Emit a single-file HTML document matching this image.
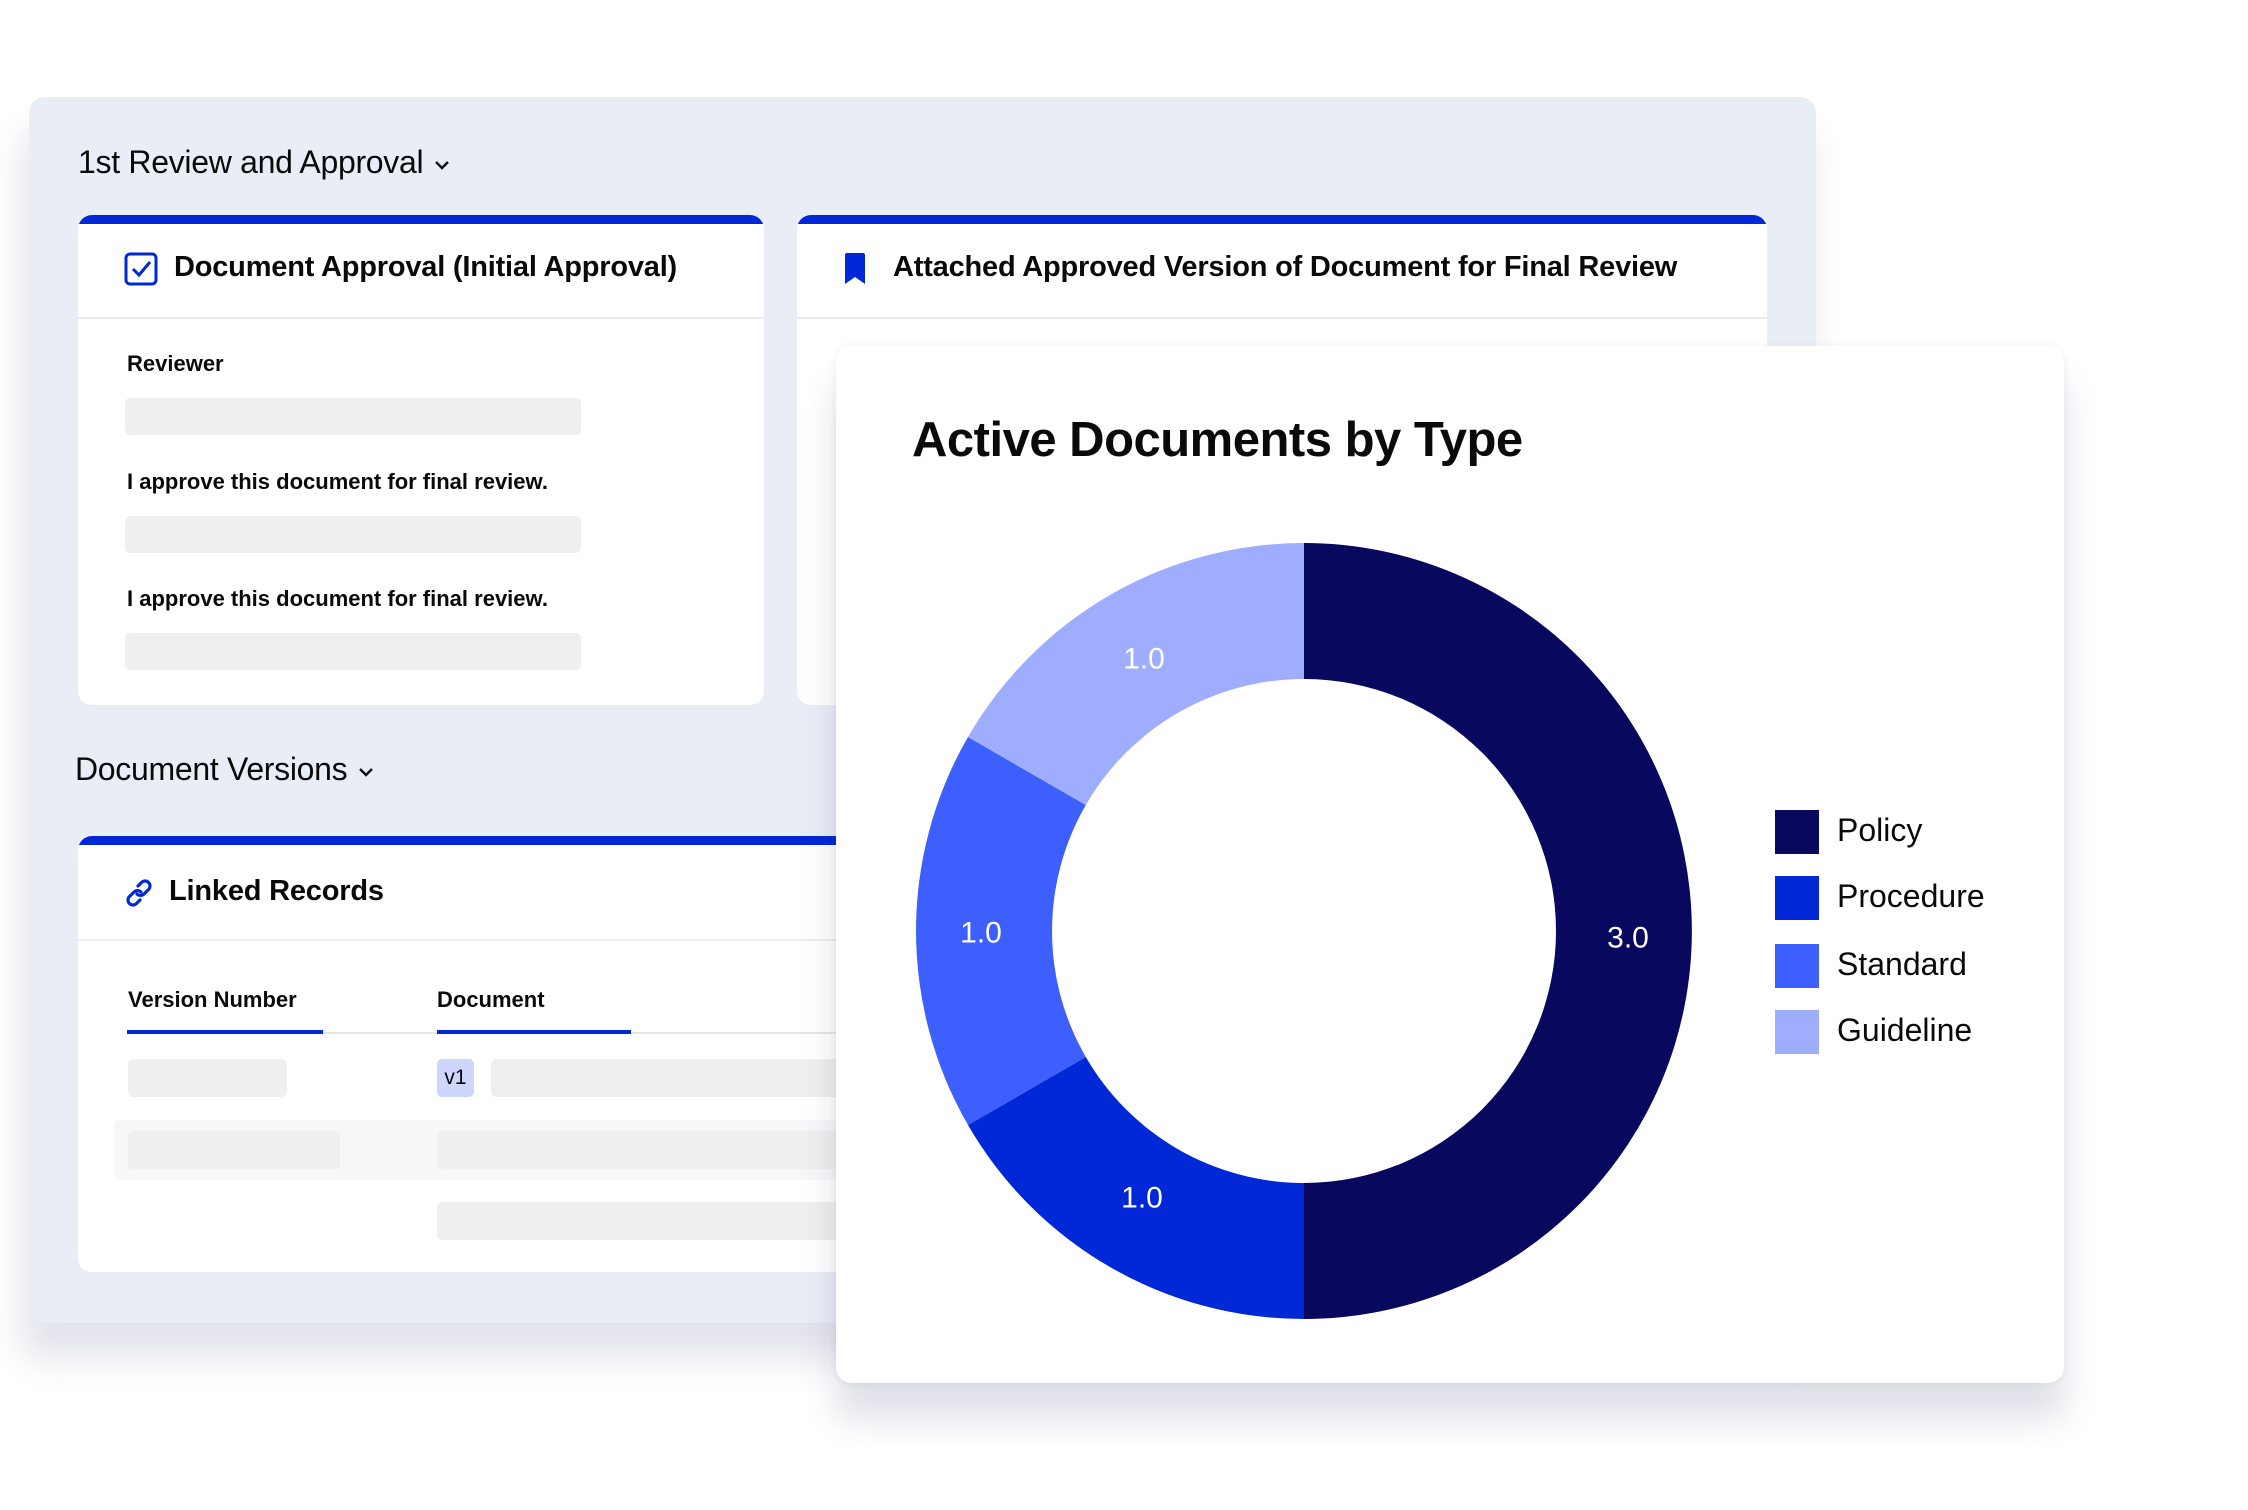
<!DOCTYPE html>
<html><head><meta charset="utf-8">
<style>
*{margin:0;padding:0;box-sizing:border-box}
html,body{width:2248px;height:1510px;background:#fff;overflow:hidden;font-family:"Liberation Sans",sans-serif;color:#0a0a0a}
.abs{position:absolute}
#panel{left:29px;top:97px;width:1787px;height:1226px;background:#e9edf5;border-radius:16px;box-shadow:-6px 36px 34px rgba(60,60,120,.14)}
.h{font-size:32px;font-weight:500;letter-spacing:-.3px}
.card{background:#fff;border-radius:14px;overflow:hidden}
.card .bar{position:absolute;left:0;top:0;right:0;height:9px;background:#0028d6}
.ct{font-size:29px;font-weight:600;letter-spacing:-.2px;white-space:nowrap}
.div{position:absolute;left:0;right:0;height:2px;background:#ececec}
.lbl{font-size:22px;font-weight:600;white-space:nowrap}
.sk{background:#efefef;border-radius:5px}
#chart{left:836px;top:346px;width:1228px;height:1037px;background:#fff;border-radius:16px;box-shadow:0 36px 34px rgba(60,60,120,.16),0 0 8px rgba(60,60,120,.08)}
.lg{font-size:32px;white-space:nowrap}
.sq{width:44px;height:44px}
</style></head><body>
<div id="panel" class="abs"></div>
<div class="abs h" style="left:78px;top:144px">1st Review and Approval <svg width="20" height="14" viewBox="0 0 20 14" style="vertical-align:middle"><path d="M4 4l6 6 6-6" fill="none" stroke="#111" stroke-width="2.5"/></svg></div>

<!-- card 1 -->
<div class="abs card" style="left:78px;top:215px;width:686px;height:490px">
  <div class="bar"></div>
  <svg class="abs" style="left:46px;top:37px" width="34" height="34" viewBox="0 0 34 34"><rect x="2" y="2" width="30" height="30" rx="4" fill="none" stroke="#0028d6" stroke-width="3"/><path d="M9 17l6 6 11-13" fill="none" stroke="#0028d6" stroke-width="3"/></svg>
  <div class="abs ct" style="left:96px;top:36px">Document Approval (Initial Approval)</div>
  <div class="div" style="top:102px"></div>
  <div class="abs lbl" style="left:49px;top:136px">Reviewer</div>
  <div class="abs sk" style="left:47px;top:183px;width:456px;height:37px"></div>
  <div class="abs lbl" style="left:49px;top:254px">I approve this document for final review.</div>
  <div class="abs sk" style="left:47px;top:301px;width:456px;height:37px"></div>
  <div class="abs lbl" style="left:49px;top:371px">I approve this document for final review.</div>
  <div class="abs sk" style="left:47px;top:418px;width:456px;height:37px"></div>
</div>

<!-- card 2 -->
<div class="abs card" style="left:797px;top:215px;width:970px;height:490px">
  <div class="bar"></div>
  <svg class="abs" style="left:48px;top:38px" width="20" height="32" viewBox="0 0 20 32"><path d="M0 2Q0 0 2 0H18Q20 0 20 2V31L10 24 0 31Z" fill="#0028d6"/></svg>
  <div class="abs ct" style="left:96px;top:36px">Attached Approved Version of Document for Final Review</div>
  <div class="div" style="top:102px"></div>
</div>

<div class="abs h" style="left:75px;top:751px">Document Versions <svg width="20" height="14" viewBox="0 0 20 14" style="vertical-align:middle"><path d="M4 4l6 6 6-6" fill="none" stroke="#111" stroke-width="2.5"/></svg></div>

<!-- card 3 -->
<div class="abs card" style="left:78px;top:836px;width:1689px;height:436px">
  <div class="bar"></div>
  <svg class="abs" style="left:46px;top:40px" width="30" height="34" viewBox="0 0 30 34"><g fill="none" stroke="#0028d6" stroke-width="3.2" stroke-linecap="round"><path d="M14 10l4-4a5 5 0 0 1 7 7l-5 5a5 5 0 0 1-7 0"/><path d="M16 24l-4 4a5 5 0 0 1-7-7l5-5a5 5 0 0 1 7 0"/></g></svg>
  <div class="abs ct" style="left:91px;top:39px">Linked Records</div>
  <div class="div" style="top:103px"></div>
  <div class="abs lbl" style="left:50px;top:151px">Version Number</div>
  <div class="abs lbl" style="left:359px;top:151px">Document</div>
  <div class="abs" style="left:49px;top:196px;right:0;height:2px;background:#e6e6e6"></div>
  <div class="abs" style="left:49px;top:194px;width:196px;height:4px;background:#0028d6"></div>
  <div class="abs" style="left:359px;top:194px;width:194px;height:4px;background:#0028d6"></div>
  <div class="abs sk" style="left:50px;top:223px;width:159px;height:38px"></div>
  <div class="abs" style="left:359px;top:223px;width:37px;height:38px;background:#cdd6fb;border-radius:5px;font-size:21px;text-align:center;line-height:38px">v1</div>
  <div class="abs sk" style="left:413px;top:223px;width:1200px;height:38px"></div>
  <div class="abs" style="left:36px;top:284px;right:0;height:60px;background:#f6f7f9;border-radius:6px"></div>
  <div class="abs sk" style="left:50px;top:295px;width:212px;height:38px"></div>
  <div class="abs sk" style="left:359px;top:295px;width:1250px;height:38px"></div>
  <div class="abs sk" style="left:359px;top:366px;width:1250px;height:38px"></div>
</div>

<!-- chart -->
<div id="chart" class="abs">
  <div class="abs" style="left:76px;top:66px;font-size:49px;font-weight:600;letter-spacing:-.5px;white-space:nowrap">Active Documents by Type</div>
  <div class="abs sq" style="left:939px;top:464px;background:#08085e"></div>
  <div class="abs lg" style="left:1001px;top:466px">Policy</div>
  <div class="abs sq" style="left:939px;top:530px;background:#0028d6"></div>
  <div class="abs lg" style="left:1001px;top:532px">Procedure</div>
  <div class="abs sq" style="left:939px;top:598px;background:#3c5ffd"></div>
  <div class="abs lg" style="left:1001px;top:600px">Standard</div>
  <div class="abs sq" style="left:939px;top:664px;background:#9eadfd"></div>
  <div class="abs lg" style="left:1001px;top:666px">Guideline</div>
</div>
<svg class="abs" style="left:0;top:0" width="2248" height="1510" viewBox="0 0 2248 1510">
  <path d="M1304 543A388 388 0 0 1 1304 1319L1304 1183A252 252 0 0 0 1304 679Z" fill="#08085e"/>
  <path d="M1304 1319A388 388 0 0 1 968 1125L1085.8 1057A252 252 0 0 0 1304 1183Z" fill="#0028d6"/>
  <path d="M968 1125A388 388 0 0 1 968 737L1085.8 805A252 252 0 0 0 1085.8 1057Z" fill="#3c5ffd"/>
  <path d="M968 737A388 388 0 0 1 1304 543L1304 679A252 252 0 0 0 1085.8 805Z" fill="#9eadfd"/>
  <g fill="#fff" font-family="Liberation Sans, sans-serif" font-size="30" text-anchor="middle" dominant-baseline="central">
    <text x="1628" y="938">3.0</text>
    <text x="1142" y="1198">1.0</text>
    <text x="981" y="933">1.0</text>
    <text x="1144" y="659">1.0</text>
  </g>
</svg>
</body></html>
